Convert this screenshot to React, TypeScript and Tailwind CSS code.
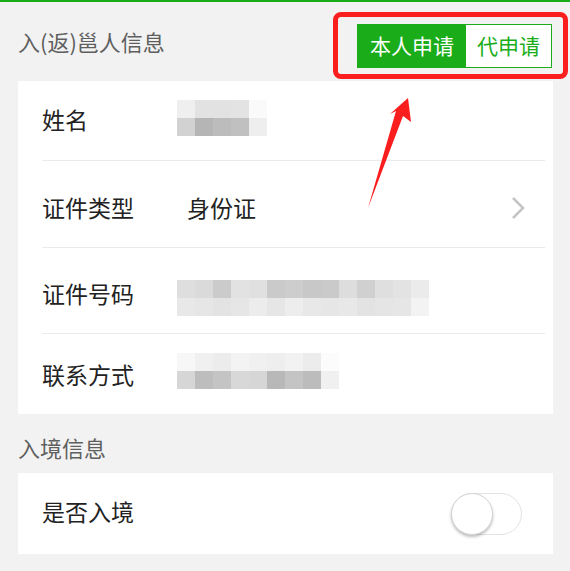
import React from "react";

const FONT = { fontFamily: '"Noto Sans CJK SC", "Noto Sans", sans-serif' };

// blurred (mosaic) values, rows of 18px blocks
const NAME_MOSAIC = [
  ["#efefef", "#e2e2e2", "#e2e2e2", "#e3e3e3", "#fafafa"],
  ["#d2d2d2", "#b5b5b5", "#bcbcbc", "#c0c0c0", "#eeeeee"],
];
const ID_MOSAIC = [
  ["#dedede", "#dadada", "#cbcbcb", "#e2e2e2", "#e0e0e0", "#cacaca", "#cdcdcd", "#c8c8c8", "#cacaca", "#dddddd", "#d0d0d0", "#dfdfdf", "#e3e3e3", "#ebebeb"],
  ["#e8e8e8", "#e6e6e6", "#e3e3e3", "#e6e6e6", "#ececec", "#e6e6e6", "#ededed", "#e8e8e8", "#e6e6e6", "#e8e8e8", "#e3e3e3", "#e5e5e5", "#e6e6e6", "#f3f3f3"],
];
const PHONE_MOSAIC = [
  ["#f7f7f7", "#f0f0f0", "#ececec", "#f3f3f3", "#f0f0f0", "#eeeeee", "#f2f2f2", "#ececec", "#fcfcfc"],
  ["#d6d6d6", "#bdbdbd", "#c4c4c4", "#d8d8d8", "#d6d6d6", "#b8b8b8", "#c4c4c4", "#bcbcbc", "#f0f0f0"],
];

function Mosaic({ rows }: { rows: string[][] }) {
  return (
    <div className="flex flex-col">
      {rows.map((r, i) => (
        <div key={i} className="flex">
          {r.map((c, j) => (
            <div key={j} className="w-[18px] h-[18px]" style={{ backgroundColor: c }} />
          ))}
        </div>
      ))}
    </div>
  );
}

function Divider() {
  return <div className="ml-[24px] mr-[8px] h-px bg-[#ebebeb]" />;
}

export default function App() {
  return (
    <div className="relative w-[570px] h-[571px] overflow-hidden bg-[#f2f2f2] border-t-2 border-[#1aad19]" style={FONT}>
      {/* section header 1 */}
      <div className="h-[79px] flex items-center justify-between pl-[18px] pr-[18px]">
        <div className="text-[22px] leading-[22px] text-[#5f5f5f] pb-[2px]">入(返)邕人信息</div>
        <div className="flex h-[44px] border border-[#1aad19] mt-[8px]">
          <div className="w-[108px] flex items-center justify-center bg-[#1aad19] text-white text-[21px] leading-[21px]">本人申请</div>
          <div className="w-[85px] flex items-center justify-center bg-white text-[#1aad19] text-[21px] leading-[21px]">代申请</div>
        </div>
      </div>

      <div className="ml-[18px] mr-[17px] bg-white">
        <div className="h-[79px] flex items-center pl-[24px]">
          <div className="w-[135px] text-[23px] leading-[23px] text-[#222] pb-[2px]">姓名</div>
          <div className="pb-[5px]">
            <Mosaic rows={NAME_MOSAIC} />
          </div>
        </div>
        <Divider />
        <div className="h-[86px] flex items-center pl-[24px] pr-[28px]">
          <div className="w-[135px] text-[23px] leading-[23px] text-[#222] pt-[7px]">证件类型</div>
          <div className="flex-1 ml-[10px] text-[23px] leading-[23px] text-[#222] pt-[7px]">身份证</div>
          <svg className="mt-[8px]" width="14" height="24" viewBox="0 0 14 24" fill="none">
            <path d="M2 2 L12 12 L2 22" stroke="#c4c4c4" strokeWidth="2.5" />
          </svg>
        </div>
        <Divider />
        <div className="h-[85px] flex items-center pl-[24px]">
          <div className="w-[135px] text-[23px] leading-[23px] text-[#222] pt-[6px]">证件号码</div>
          <div className="pt-[15px]">
            <Mosaic rows={ID_MOSAIC} />
          </div>
        </div>
        <Divider />
        <div className="h-[80px] flex items-center pl-[24px]">
          <div className="w-[135px] text-[23px] leading-[23px] text-[#222]">联系方式</div>
          <div className="pb-[6px]">
            <Mosaic rows={PHONE_MOSAIC} />
          </div>
        </div>
      </div>

      {/* section header 2 */}
      <div className="h-[59px] flex items-center pl-[18px]">
        <div className="text-[22px] leading-[22px] text-[#5f5f5f] pt-[7px]">入境信息</div>
      </div>

      <div className="ml-[18px] mr-[17px] bg-white h-[81px] flex items-center justify-between pl-[24px] pr-[31px]">
        <div className="text-[23px] leading-[23px] text-[#222] pb-[4px]">是否入境</div>
        <div className="relative w-[71px] h-[42px] rounded-full border border-[#e3e3e3] bg-white">
          <div className="absolute left-[-1px] top-[-1px] w-[42px] h-[42px] rounded-full bg-white border border-[#d6d6d6] shadow-[0_2px_3px_rgba(0,0,0,0.25)]" />
        </div>
      </div>

      {/* annotation overlay */}
      <div className="absolute left-[333px] top-[10px] w-[235px] h-[67px] border-[5px] border-[#fa1e1e] rounded-[8px] pointer-events-none" />
      <svg className="absolute left-0 top-0 pointer-events-none" width="570" height="571" viewBox="0 0 570 571">
        <polygon points="408,96 411,120 403,114 368,206 396,109 390,112" fill="#fa1e1e" />
      </svg>
    </div>
  );
}
